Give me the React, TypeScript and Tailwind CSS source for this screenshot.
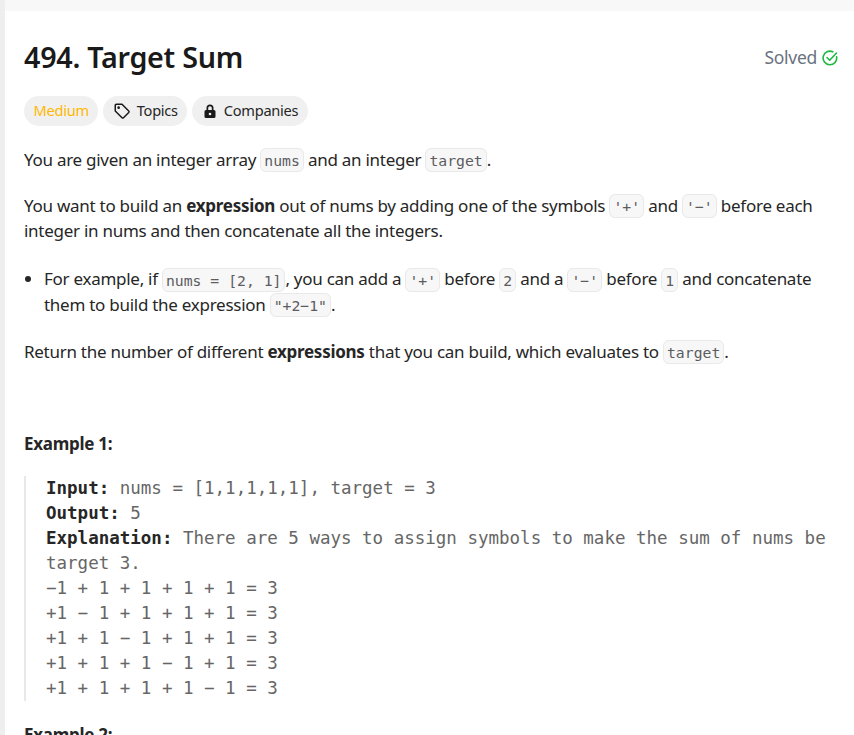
import React from "react";

const Code = ({ children }: { children: React.ReactNode }) => (
  <code className="rounded-[6px] border border-[#e9e9ea] bg-[#f7f7f8] px-[3px] py-[2.5px] font-['DejaVu_Sans_Mono',monospace] text-[14.75px] leading-none tracking-normal text-[#5c5c5f]">
    {children}
  </code>
);

const Pill = ({ children, className = "" }: { children: React.ReactNode; className?: string }) => (
  <div className={"flex h-[30px] items-center gap-[6px] rounded-full bg-[#f0f0f0] px-[9.5px] text-[14.6px] " + className}>{children}</div>
);

const B = ({ children }: { children: React.ReactNode }) => <b className="font-bold text-[#262626]">{children}</b>;

const TagIcon = () => (
  <svg width="18" height="18" viewBox="0 0 24 24" fill="none" stroke="#1a1a1a" strokeWidth="2" strokeLinejoin="round" strokeLinecap="round">
    <path d="M3 4.500A1.500 1.500 0 0 1 4.500 3H12l9 9a1.500 1.500 0 0 1 0 2l-7 7a1.500 1.500 0 0 1-2 0l-9-9z" />
    <circle cx="7.500" cy="7.500" r="0.800" fill="#1a1a1a" />
  </svg>
);

const LockIcon = () => (
  <svg width="16" height="16" viewBox="0 0 16 16" fill="#1a1a1a">
    <path d="M4.500 7V5a3.500 3.500 0 0 1 7 0v2h.5A1.500 1.500 0 0 1 13.500 8.500v5A1.500 1.500 0 0 1 12 15H4a1.500 1.500 0 0 1-1.500-1.500v-5A1.500 1.500 0 0 1 4 7zm1.700 0h3.600V5a1.800 1.800 0 0 0-3.600 0z" />
    <circle cx="8" cy="11" r="1.300" fill="#f0f0f0" />
  </svg>
);

const SolvedIcon = () => (
  <svg width="16" height="16" viewBox="0 0 16 16" fill="none" stroke="#1cb83f" strokeWidth="1.600" strokeLinecap="round" strokeLinejoin="round">
    <path d="M14.600 6.800A6.800 6.800 0 1 1 10.800 1.800" />
    <path d="M5 7.500l2.700 2.700L14.500 3" />
  </svg>
);

export default function App() {
  return (
    <div className="h-[735px] w-[854px] overflow-hidden bg-white font-['Noto_Sans',sans-serif] text-[17px] leading-[25.5px] tracking-[-0.27px] text-[#262626]">
      <div className="h-[11px] border-l-[5px] border-[#eeeeee] bg-[#f8f8f8]" />
      <div className="h-[724px] border-l-[5px] border-[#eeeeee] pl-[19px] pr-[16px]">
        <div className="flex items-center justify-between pt-[29px]">
          <h1 className="text-[28.7px] font-semibold leading-[34px] text-[#1a1a1a]">494. Target Sum</h1>
          <div className="flex items-center gap-[5px] pt-[2px] text-[17.5px] text-[#6b7280]">
            Solved <SolvedIcon />
          </div>
        </div>

        <div className="mt-[22px] flex gap-[5px]">
          <Pill className="text-[#ffb800]">Medium</Pill>
          <Pill><TagIcon />Topics</Pill>
          <Pill><LockIcon />Companies</Pill>
        </div>

        <p className="mt-[20.500px]">
          You are given an integer array <Code>nums</Code> and an integer <Code>target</Code>.
        </p>
        <p className="mt-[20.500px]">
          You want to build an <B>expression</B> out of nums by adding one of the symbols <Code>'+'</Code> and <Code>'−'</Code> before each<br />
          integer in nums and then concatenate all the integers.
        </p>
        <ul className="mt-[22.500px] list-disc pl-[20px]">
          <li>
            For example, if <Code>nums = [2, 1]</Code>, you can add a <Code>'+'</Code> before <Code>2</Code> and a <Code>'−'</Code> before <Code>1</Code> and concatenate<br />
            them to build the expression <Code>"+2−1"</Code>.
          </li>
        </ul>
        <p className="mt-[21.500px]">
          Return the number of different <B>expressions</B> that you can build, which evaluates to <Code>target</Code>.
        </p>

        <p className="mt-[66.500px] font-bold">Example 1:</p>

        <pre className="mt-[20px] border-l-[2px] border-[#e8e8e8] pl-[20px] font-['DejaVu_Sans_Mono',monospace] text-[17.5px] leading-[25px] tracking-normal text-[#666666]">
          <b className="text-[#262626]">Input:</b> nums = [1,1,1,1,1], target = 3{"\n"}
          <b className="text-[#262626]">Output:</b> 5{"\n"}
          <b className="text-[#262626]">Explanation:</b> There are 5 ways to assign symbols to make the sum of nums be{"\n"}
          target 3.{"\n"}
          −1 + 1 + 1 + 1 + 1 = 3{"\n"}
          +1 − 1 + 1 + 1 + 1 = 3{"\n"}
          +1 + 1 − 1 + 1 + 1 = 3{"\n"}
          +1 + 1 + 1 − 1 + 1 = 3{"\n"}
          +1 + 1 + 1 + 1 − 1 = 3
        </pre>

        <p className="mt-[21px] font-bold">Example 2:</p>
      </div>
    </div>
  );
}
